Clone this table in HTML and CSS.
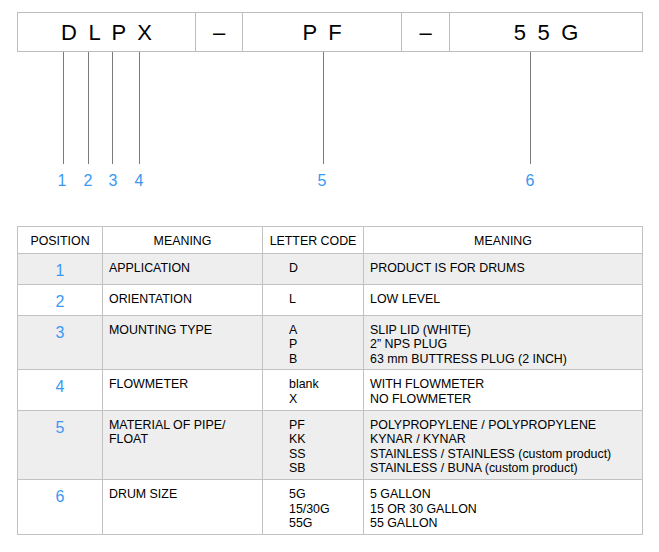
FILE: index.html
```html
<!DOCTYPE html>
<html>
<head>
<meta charset="utf-8">
<link rel="stylesheet" href="styles.css">
</head>
<body>
<div class="page">
  <div class="code">
    <div class="seg seg-a">D L P X</div>
    <div class="seg seg-dash1">–</div>
    <div class="seg seg-b">P F</div>
    <div class="seg seg-dash2">–</div>
    <div class="seg seg-c">5 5 G</div>
  </div>
  <div class="callouts">
    <div class="lead" style="left:46px"></div>
    <div class="lead" style="left:71px"></div>
    <div class="lead" style="left:95px"></div>
    <div class="lead" style="left:122px"></div>
    <div class="lead" style="left:306px"></div>
    <div class="lead" style="left:513px"></div>
    <span class="num" style="left:45px">1</span>
    <span class="num" style="left:71px">2</span>
    <span class="num" style="left:96px">3</span>
    <span class="num" style="left:122px">4</span>
    <span class="num" style="left:305px">5</span>
    <span class="num" style="left:513px">6</span>
  </div>
  <table class="legend">
    <colgroup>
      <col class="c-pos">
      <col class="c-mean">
      <col class="c-code">
      <col class="c-desc">
    </colgroup>
    <thead>
      <tr>
        <th>POSITION</th>
        <th>MEANING</th>
        <th>LETTER CODE</th>
        <th>MEANING</th>
      </tr>
    </thead>
    <tbody>
      <tr class="shade">
        <td class="pos">1</td>
        <td>APPLICATION</td>
        <td class="letters">D</td>
        <td>PRODUCT IS FOR DRUMS</td>
      </tr>
      <tr>
        <td class="pos">2</td>
        <td>ORIENTATION</td>
        <td class="letters">L</td>
        <td>LOW LEVEL</td>
      </tr>
      <tr class="shade">
        <td class="pos">3</td>
        <td>MOUNTING TYPE</td>
        <td class="letters">A<br>P<br>B</td>
        <td>SLIP LID (WHITE)<br>2” NPS PLUG<br>63 mm BUTTRESS PLUG (2 INCH)</td>
      </tr>
      <tr>
        <td class="pos">4</td>
        <td>FLOWMETER</td>
        <td class="letters">blank<br>X</td>
        <td>WITH FLOWMETER<br>NO FLOWMETER</td>
      </tr>
      <tr class="shade">
        <td class="pos">5</td>
        <td>MATERIAL OF PIPE/<br>FLOAT</td>
        <td class="letters">PF<br>KK<br>SS<br>SB</td>
        <td>POLYPROPYLENE / POLYPROPYLENE<br>KYNAR / KYNAR<br>STAINLESS / STAINLESS (custom product)<br>STAINLESS / BUNA (custom product)</td>
      </tr>
      <tr>
        <td class="pos">6</td>
        <td>DRUM SIZE</td>
        <td class="letters">5G<br>15/30G<br>55G</td>
        <td>5 GALLON<br>15 OR 30 GALLON<br>55 GALLON</td>
      </tr>
    </tbody>
  </table>
</div>
</body>
</html>
```
FILE: styles.css
```css
html, body {
  margin: 0;
  padding: 0;
  background: #ffffff;
}

body {
  font-family: "Liberation Sans", Arial, Helvetica, sans-serif;
  color: #000000;
}

.page {
  padding: 12px 0 0 17px;
}

.code {
  display: flex;
  height: 40px;
  border: 1px solid #bcbcbc;
  border-left: none;
  box-sizing: border-box;
  width: 626px;
}

.seg {
  display: flex;
  align-items: center;
  justify-content: center;
  border-left: 1px solid #bcbcbc;
  box-sizing: border-box;
  font-size: 22px;
  letter-spacing: 2.7px;
  padding-left: 2.7px;
  padding-top: 2px;
  color: #000;
}

.seg-a { width: 178px; }
.seg-dash1 { width: 47px; letter-spacing: 0; padding-left: 0; }
.seg-b { width: 159px; }
.seg-dash2 { width: 48px; letter-spacing: 0; padding-left: 0; }
.seg-c { width: 193px; }

.callouts {
  position: relative;
  height: 174px;
}

.lead {
  position: absolute;
  top: 0;
  width: 1px;
  height: 112px;
  background: #7a7a7a;
}

.num {
  position: absolute;
  top: 120px;
  width: 0;
  display: flex;
  justify-content: center;
  font-size: 16px;
  line-height: 18px;
  color: #3a98f5;
}

.legend {
  border-collapse: collapse;
  table-layout: fixed;
  width: 626px;
  font-size: 12.4px;
  line-height: 14.6px;
}

.c-pos { width: 85px; }
.c-mean { width: 160px; }
.c-code { width: 101px; }
.c-desc { width: 279px; }

.legend th,
.legend td {
  border: 1px solid #c2c2c2;
  padding: 7px 6px 3px;
  vertical-align: top;
  text-align: left;
}

.legend th {
  font-weight: normal;
  text-align: center;
  padding: 7px 4px 4px;
}

.legend tr.shade td {
  background: #eeeeee;
}

.legend td.pos {
  text-align: center;
  font-size: 16px;
  line-height: 19px;
  color: #3a98f5;
  padding-top: 7px;
  padding-bottom: 4px;
}

.legend td.letters {
  padding-left: 26px;
}
```
